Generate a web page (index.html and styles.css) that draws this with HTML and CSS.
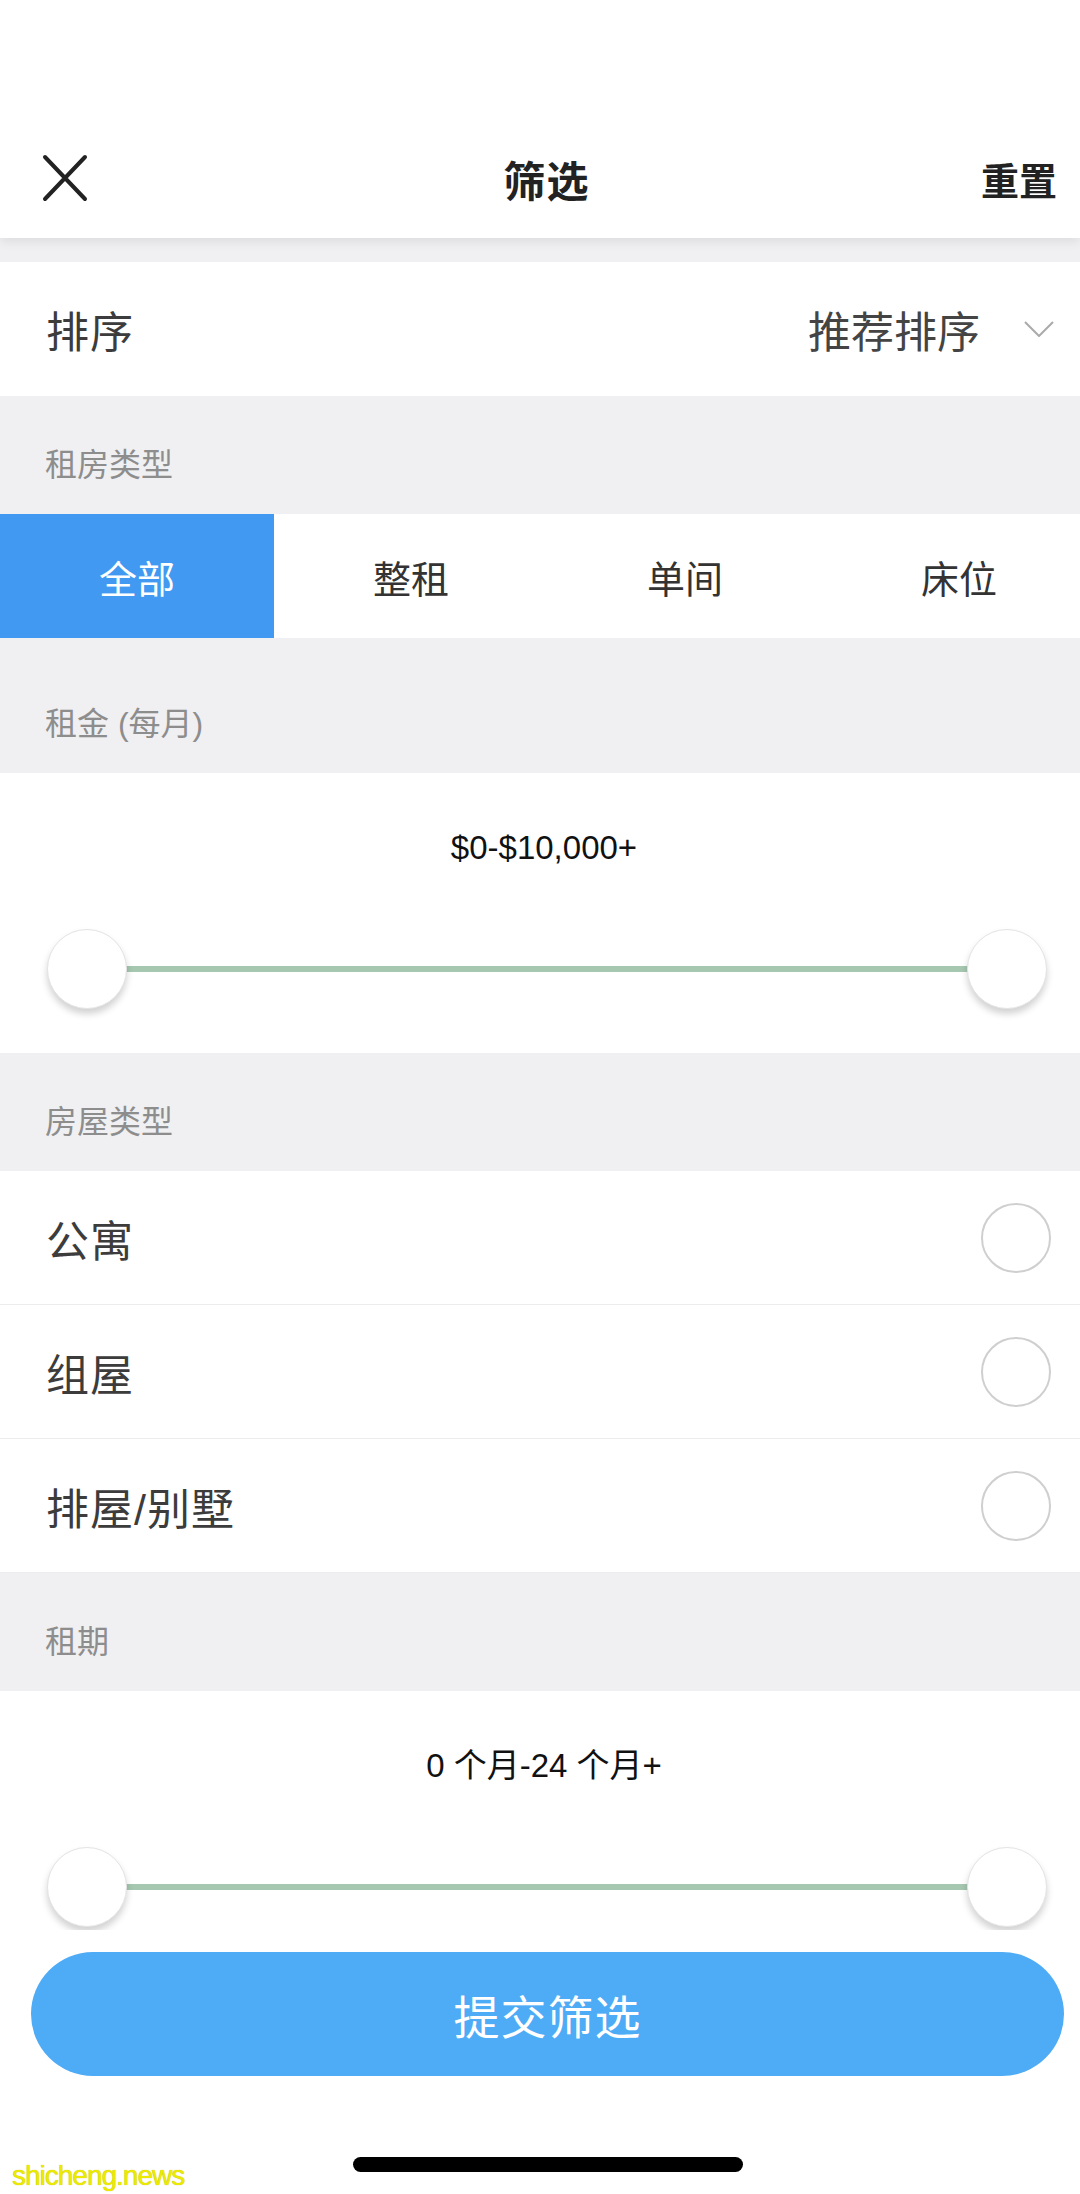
FILE: index.html
```html
<!DOCTYPE html>
<html lang="zh-CN">
<head>
  <meta charset="UTF-8">
  <meta name="viewport" content="width=device-width, initial-scale=1.0">
  <title>筛选</title>
  <link rel="stylesheet" href="styles.css">
</head>
<body>

  <!-- Top bar -->
  <header class="topbar">
    <div class="topbar-row">
      <span class="close">
        <svg width="46" height="48" viewBox="0 0 46 48">
          <path d="M3 3 L43 45 M43 3 L3 45" stroke="#222" stroke-width="4" fill="none" stroke-linecap="round"/>
        </svg>
      </span>
      <h1 class="title">筛选</h1>
      <span class="reset">重置</span>
    </div>
  </header>

  <div class="spacer"></div>

  <!-- Sort -->
  <div class="sort-row">
    <span class="row-label">排序</span>
    <span class="sort-value">
      推荐排序
      <svg width="30" height="16" viewBox="0 0 30 16">
        <path d="M1 1 L15 15 L29 1" stroke="#aaa" stroke-width="2" fill="none"/>
      </svg>
    </span>
  </div>

  <!-- Rent type -->
  <div class="section-title">租房类型</div>
  <div class="tabs">
    <div class="tab active">全部</div>
    <div class="tab">整租</div>
    <div class="tab">单间</div>
    <div class="tab">床位</div>
  </div>

  <!-- Price -->
  <div class="section-title tall">租金 (每月)</div>
  <div class="range">
    <div class="range-value">$0-$10,000+</div>
    <div class="slider">
      <span class="thumb"></span>
      <span class="track"></span>
      <span class="thumb"></span>
    </div>
  </div>

  <!-- House type -->
  <div class="section-title">房屋类型</div>
  <div class="option">
    <span class="row-label">公寓</span>
    <span class="radio"></span>
  </div>
  <div class="option">
    <span class="row-label">组屋</span>
    <span class="radio"></span>
  </div>
  <div class="option">
    <span class="row-label">排屋/别墅</span>
    <span class="radio"></span>
  </div>

  <!-- Lease -->
  <div class="section-title">租期</div>
  <div class="range">
    <div class="range-value">0 个月-24 个月+</div>
    <div class="slider">
      <span class="thumb"></span>
      <span class="track"></span>
      <span class="thumb"></span>
    </div>
  </div>

  <!-- Bottom submit bar -->
  <footer class="bottom-bar">
    <button class="submit">提交筛选</button>
    <div class="home-indicator"></div>
    <span class="watermark">shicheng.news</span>
  </footer>

</body>
</html>
```

FILE: styles.css
```css
/* Base styling */
* {
  margin: 0;
  padding: 0;
  box-sizing: border-box;
}

body {
  width: 1080px;
  height: 2194px;
  overflow: hidden;
  background-color: #fff;
  font-family: 'Liberation Sans', 'Noto Sans CJK SC', sans-serif;
  color: #333;
  position: relative;
}

/* Top bar */
.topbar {
  height: 238px;
  padding-top: 118px;
  background-color: #fff;
  position: relative;
  z-index: 2;
  box-shadow: 0 4px 10px rgba(0, 0, 0, 0.08);
}

.topbar-row {
  height: 120px;
  display: grid;
  grid-template-columns: 1fr auto 1fr;
  align-items: center;
  padding: 0 23px 0 42px;
}

.close {
  display: flex;
  align-items: center;
}

.title {
  font-size: 42px;
  font-weight: 700;
  color: #222;
  letter-spacing: 1px;
  margin-right: 6px;
}

.reset {
  justify-self: end;
  font-size: 38px;
  font-weight: 700;
  color: #222;
}

.spacer {
  height: 24px;
  background-color: #f0f0f2;
}

/* Sort row */
.sort-row {
  height: 134px;
  display: flex;
  align-items: center;
  justify-content: space-between;
  padding: 0 26px 0 46px;
}

.row-label {
  font-size: 43px;
  color: #3c3c3c;
  letter-spacing: 1px;
}

.sort-value {
  display: flex;
  align-items: center;
  gap: 44px;
  font-size: 43px;
  color: #444;
}

/* Section headers */
.section-title {
  height: 118px;
  padding: 14px 0 0 45px;
  display: flex;
  align-items: center;
  background-color: #f0f0f2;
  font-size: 32px;
  color: #8d8d8d;
}

.section-title.tall {
  height: 135px;
  padding-top: 30px;
}

/* Rent type tabs */
.tabs {
  height: 124px;
  display: grid;
  grid-template-columns: repeat(4, 274px);
  overflow: hidden;
}

.tab {
  display: flex;
  align-items: center;
  justify-content: center;
  font-size: 38px;
  color: #333;
}

.tab.active {
  background-color: #4199f1;
  color: #fff;
}

/* Range sliders */
.range {
  height: 280px;
  padding-top: 54px;
}

.range-value {
  text-align: center;
  font-size: 33px;
  color: #111;
  height: 42px;
  line-height: 42px;
  padding-left: 8px;
}

.slider {
  display: flex;
  align-items: center;
  margin: 60px 33px 0 47px;
}

.thumb {
  width: 80px;
  height: 80px;
  flex-shrink: 0;
  border-radius: 50%;
  background-color: #fff;
  border: 1px solid #e4e4e4;
  box-shadow: 0 5px 7px rgba(0, 0, 0, 0.18);
  position: relative;
  z-index: 1;
}

.track {
  flex: 1;
  height: 6px;
  margin: 0 -2px;
  background-color: #a6c7b0;
}

/* House type options */
.option {
  height: 134px;
  display: flex;
  align-items: center;
  justify-content: space-between;
  padding: 0 29px 0 46px;
  border-bottom: 1px solid #ececec;
}

.option:last-of-type {
  border-bottom: none;
}

.radio {
  width: 70px;
  height: 70px;
  border-radius: 50%;
  border: 2px solid #cfcfcf;
}

/* Bottom bar */
.bottom-bar {
  position: absolute;
  left: 0;
  right: 0;
  bottom: 0;
  height: 264px;
  background-color: #fff;
  padding-top: 22px;
  z-index: 3;
}

.submit {
  display: block;
  width: 1033px;
  height: 124px;
  margin-left: 31px;
  border: none;
  border-radius: 62px;
  background-color: #4eabf6;
  color: #fff;
  font-family: 'Noto Sans CJK SC', sans-serif;
  font-size: 46px;
  letter-spacing: 1px;
}

.home-indicator {
  width: 390px;
  height: 15px;
  margin: 81px 0 0 353px;
  border-radius: 8px;
  background-color: #000;
}

.watermark {
  position: absolute;
  left: 12px;
  bottom: 2px;
  font-family: 'Liberation Sans Narrow', 'Liberation Sans', sans-serif;
  font-size: 28px;
  color: #ecea00;
  letter-spacing: -1px;
  text-shadow: 0 0 1px #b8b000;
}
```
